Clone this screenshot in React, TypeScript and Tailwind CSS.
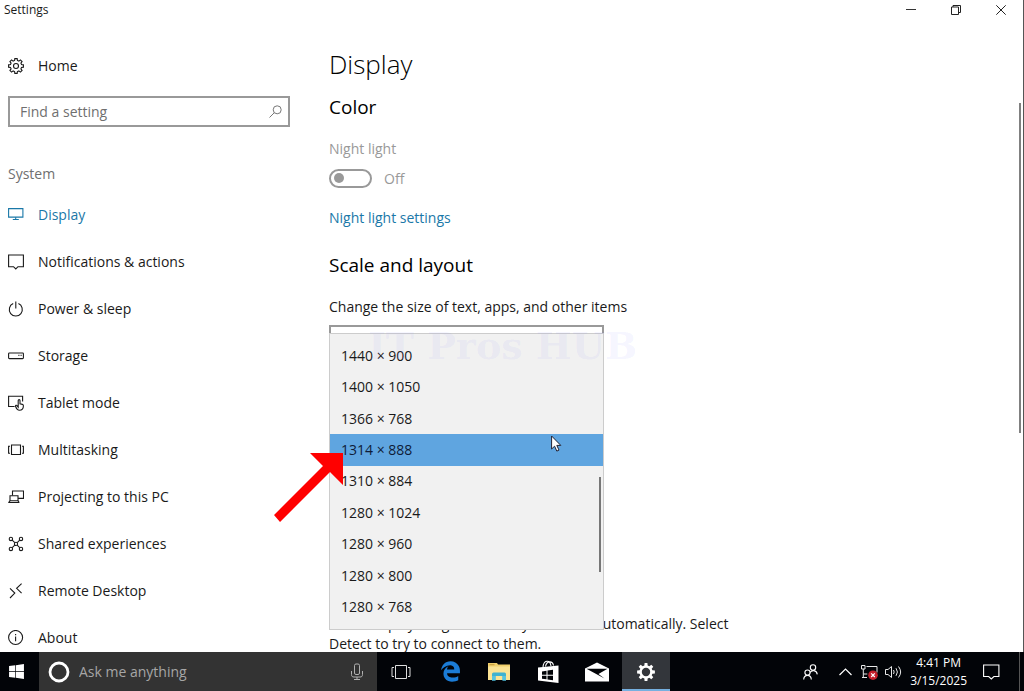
import { useState } from 'react';
import type { ReactNode } from 'react';
import { FaEdgeLegacy, FaWindows } from 'react-icons/fa6';

// Outline of a cog with flat teeth, centred on (c, c)
function gearPath(c: number, outer: number, inner: number, teeth = 8) {
  const step = (Math.PI * 2) / teeth;
  const points: string[] = [];
  for (let i = 0; i < teeth; i++) {
    const a = i * step - Math.PI / 2;
    [
      [-0.32, inner],
      [-0.2, outer],
      [0.2, outer],
      [0.32, inner],
    ].forEach(([offset, r]) => {
      const x = c + r * Math.cos(a + offset * step);
      const y = c + r * Math.sin(a + offset * step);
      points.push(`${x.toFixed(2)} ${y.toFixed(2)}`);
    });
  }
  return `M${points.join('L')}Z`;
}

function Icon({ children, size = 16 }: { children: ReactNode; size?: number }) {
  return (
    <svg
      width={size}
      height={size}
      viewBox="0 0 16 16"
      fill="none"
      stroke="currentColor"
      strokeWidth="1.1"
      className="shrink-0"
      aria-hidden="true"
    >
      {children}
    </svg>
  );
}

const navItems: { label: string; icon: ReactNode }[] = [
  {
    label: 'Display',
    icon: (
      <>
        <path d="M.6 1.6h14.3v8.500H.6z" />
        <path d="M7.7 10.200v2.200M4.8 12.500h6" />
      </>
    ),
  },
  {
    label: 'Notifications & actions',
    icon: <path d="M.6 1h14.8v11.700H10L7.8 15l-2.3-2.3H.6z" />,
  },
  {
    label: 'Power & sleep',
    icon: <path d="M7.8.4v7M5.2 2.6a6.5 6.5 0 1 0 5.2 0" />,
  },
  {
    label: 'Storage',
    icon: (
      <>
        <rect x=".6" y="5" width="14.8" height="5.6" rx=".8" />
        <path d="M10.4 7.4h1M12.6 7.4h1" />
      </>
    ),
  },
  {
    label: 'Tablet mode',
    icon: (
      <>
        <path d="M6.6 11.5H.6V1.2h14v5.2" />
        <path d="M10.200 10.800V5.600c0-1.300 1.800-1.300 1.800 0v3.200l2.400.6c.8.2 1 .7 1 1.400 0 2.500-1.200 4.500-4 4.500-2 0-3-1.600-3.900-4-.3-1 1-1.500 1.700-.4l1 1.300z" />
      </>
    ),
  },
  {
    label: 'Multitasking',
    icon: (
      <>
        <path d="M3.5 3h9v9.5h-9z" />
        <path d="M2 4.2H.6v7H2M14 4.2h1.4v7H14" />
      </>
    ),
  },
  {
    label: 'Projecting to this PC',
    icon: (
      <>
        <path d="M4.5 6.5V2h11v7.4H10" />
        <path d="M2 6.8h8v5H2zM.4 13.5h10.8" />
        <path d="M10 11.8l1.2 1.7M2 11.8L.6 13.5" />
      </>
    ),
  },
  {
    label: 'Shared experiences',
    icon: (
      <>
        <circle cx="2.9" cy="2.9" r="1.7" />
        <circle cx="13" cy="2.9" r="1.7" />
        <circle cx="2.9" cy="12.9" r="1.7" />
        <circle cx="13" cy="12.9" r="1.7" />
        <circle cx="8" cy="7.9" r="1.6" />
        <path d="M4.2 4.1l2.6 2.6M11.7 4.1L9.2 6.7M4.2 11.7l2.6-2.6M11.7 11.7L9.2 9.100" />
      </>
    ),
  },
  {
    label: 'Remote Desktop',
    icon: <path d="M13.6.6l-5 4.7 5 4.8M2 5.4l4.8 4.7L2 15" />,
  },
  {
    label: 'About',
    icon: (
      <>
        <circle cx="7.6" cy="7.5" r="7" />
        <path d="M7.6 6.5v4.8M7.6 4v1.2" />
      </>
    ),
  },
];

const resolutions = [
  '1440 × 900',
  '1400 × 1050',
  '1366 × 768',
  '1314 × 888',
  '1310 × 884',
  '1280 × 1024',
  '1280 × 960',
  '1280 × 800',
  '1280 × 768',
];

function TitleBar() {
  return (
    <header className="flex h-5 shrink-0 items-center justify-between pl-1">
      <span className="text-[12px] leading-5">Settings</span>
      <div className="flex">
        <button aria-label="Minimize" className="flex h-5 w-[45px] items-center justify-center">
          <svg width="10" height="10" viewBox="0 0 10 10" stroke="#333">
            <path d="M0 4.5h10" />
          </svg>
        </button>
        <button aria-label="Restore" className="flex h-5 w-[45px] items-center justify-center">
          <svg width="10" height="10" viewBox="0 0 10 10" fill="none" stroke="#222">
            <path d="M.5 2h7v7.500h-7zM2 2V.5h7.500v7H8" />
          </svg>
        </button>
        <button aria-label="Close" className="flex h-5 w-[45px] items-center justify-center">
          <svg width="10" height="10" viewBox="0 0 10 10" stroke="#222">
            <path d="M.3.3l9.4 9.4M9.7.3L.3 9.7" />
          </svg>
        </button>
      </div>
    </header>
  );
}

function Sidebar() {
  const [active, setActive] = useState('Display');

  return (
    <aside className="w-[290px] shrink-0 pt-[22px] pl-2">
      <a href="#home" className="flex h-[47px] items-center gap-[14px]">
        <Icon>
          <path d={gearPath(8, 7.5, 5.7)} />
          <circle cx="8" cy="8" r="2.5" />
        </Icon>
        Home
      </a>

      <div className="relative mt-[7px]">
        <input
          type="text"
          aria-label="Find a setting"
          placeholder="Find a setting"
          className="block h-[31px] w-full border-2 border-[#999] bg-white pr-8 pl-[10px] placeholder:text-[#6f6f6f]"
        />
        <svg
          width="13"
          height="13"
          viewBox="0 0 13 13"
          fill="none"
          stroke="#777"
          className="absolute top-[9px] right-2"
        >
          <circle cx="8.2" cy="4.8" r="4" />
          <path d="M5.3 7.7L.5 12.5" />
        </svg>
      </div>

      <h2 className="mt-[37px] leading-5 text-[#6f6f6f]">System</h2>
      <nav className="mt-[7px]">
        {navItems.map((item) => (
          <a
            key={item.label}
            href={`#${item.label}`}
            onClick={() => setActive(item.label)}
            className={
              item.label === active
                ? 'flex h-[47px] items-center gap-[14px] text-[#1a78a8]'
                : 'flex h-[47px] items-center gap-[14px]'
            }
          >
            <Icon>{item.icon}</Icon>
            {item.label}
          </a>
        ))}
      </nav>
    </aside>
  );
}

function ResolutionList() {
  const [selected, setSelected] = useState('1314 × 888');

  return (
    <div className="absolute -top-[23px] left-0 h-[297px] w-[275px] border border-[#ccc] bg-[#f1f1f1] py-[6px]">
      <div role="listbox" aria-label="Resolution" className="flex h-full flex-col">
        {resolutions.map((value) => (
          <button
            key={value}
            role="option"
            aria-selected={value === selected}
            onClick={() => setSelected(value)}
            className={
              value === selected
                ? 'flex-1 bg-[#5fa5e0] pl-[11px] text-left leading-5 text-[#0f1c38]'
                : 'flex-1 pl-[11px] text-left leading-5'
            }
          >
            {value}
          </button>
        ))}
      </div>
      <div className="absolute top-[143px] right-[2px] h-[95px] w-[2px] bg-[#777]" />

      {/* Watermark */}
      <div className="pointer-events-none absolute -top-[12px] left-[38px] font-['DejaVu_Serif',serif] text-[38px] leading-[47px] font-bold whitespace-nowrap text-[#7878ff]/8">
        IT Pros HUB
      </div>

      {/* Mouse pointer */}
      <svg
        width="12"
        height="18"
        viewBox="0 0 12 18"
        className="pointer-events-none absolute top-[101px] left-[221px]"
      >
        <path d="M.6 1v13l3-2.8 2.2 4.9 2.2-1-2.2-4.7h4z" fill="#fff" stroke="#223" />
      </svg>

      {/* Arrow pointing at the chosen resolution */}
      <svg
        width="70"
        height="70"
        viewBox="0 0 70 70"
        className="pointer-events-none absolute top-[118px] -left-[57px]"
      >
        <path d="M37 1h33v32L57 20 7 70l-6-7 49-49z" fill="#f00" />
      </svg>
    </div>
  );
}

function DisplaySettings() {
  return (
    <main className="relative min-w-0 flex-1 pt-6 pl-[39px]">
      <h1 className="text-[26px] leading-10 font-light text-black">Display</h1>
      <h2 className="mt-[9px] text-[19px] leading-7 text-black">Color</h2>

      <p className="mt-[18px] leading-5 text-[#999]">Night light</p>
      <label className="mt-[9px] flex h-5 items-center gap-3 text-[#999]">
        <input type="checkbox" disabled className="peer sr-only" />
        <span className="flex h-[19px] w-[43px] items-center rounded-full border-2 border-[#999] pl-[3px]">
          <span className="h-[10px] w-[10px] rounded-full bg-[#999]" />
        </span>
        Off
      </label>
      <a href="#night-light" className="mt-5 block w-fit leading-5 text-[#1a78a8]">
        Night light settings
      </a>

      <h2 className="mt-[23px] text-[19px] leading-7 text-black">Scale and layout</h2>
      <label htmlFor="scale" className="mt-[18px] block leading-5">
        Change the size of text, apps, and other items
      </label>
      <select
        id="scale"
        className="mt-2 block h-[31px] w-[275px] appearance-none border-2 border-[#999] bg-white"
      />

      <div className="relative h-[258px]">
        <ResolutionList />
      </div>

      <p className="max-w-[410px] leading-5">
        Older displays might not always connect automatically. Select Detect to try to connect to
        them.
      </p>

      <div className="absolute top-[83px] right-[2px] h-[330px] w-[2px] bg-[#808080]" />
    </main>
  );
}

function TaskButton({
  label,
  active,
  children,
}: {
  label: string;
  active?: boolean;
  children: ReactNode;
}) {
  return (
    <button
      aria-label={label}
      className={
        active
          ? 'flex h-full w-12 items-center justify-center border-b-2 border-[#76b0e0] bg-[#33363b] pt-[2px]'
          : 'flex h-full w-12 items-center justify-center'
      }
    >
      {children}
    </button>
  );
}

function Taskbar() {
  return (
    <footer className="flex h-[39px] shrink-0 items-center bg-[#020408] text-white">
      <button aria-label="Start" className="flex h-full w-[39px] items-center justify-center pr-[7px]">
        <FaWindows size={17} />
      </button>

      <div className="flex h-full w-[338px] items-center bg-[#333] pr-[13px] pl-[9px]">
        <svg width="22" height="22" viewBox="0 0 22 22" fill="none" className="shrink-0">
          <circle cx="11" cy="11" r="9" stroke="#fff" strokeWidth="2.8" />
        </svg>
        <input
          type="text"
          aria-label="Ask me anything"
          placeholder="Ask me anything"
          className="ml-[9px] min-w-0 flex-1 bg-transparent placeholder:text-[#a6a6a6]"
        />
        <svg width="14" height="18" viewBox="0 0 14 18" fill="none" stroke="#b0b0b0">
          <rect x="4.5" y="1" width="5" height="10.5" rx="1.5" />
          <path d="M1.5 8v3.5c0 2 1 2.5 2.5 2.5h6c1.5 0 2.500-.5 2.500-2.500V8M7 14v2.500M4 16.500h6" />
        </svg>
      </div>

      <div className="flex h-full gap-px">
        <TaskButton label="Task View">
          <svg width="20" height="16" viewBox="0 0 20 16" fill="none" stroke="#ddd">
            <path d="M4.5 1.5h11v13h-11zM3 3.5H1v9h2M17 3.5h2v9h-2" />
          </svg>
        </TaskButton>
        <TaskButton label="Microsoft Edge">
          <FaEdgeLegacy size={21} color="#1b7cd6" />
        </TaskButton>
        <TaskButton label="File Explorer">
          <svg width="22" height="19" viewBox="0 0 22 19">
            <path d="M0 1h9l1 1.500h12V18H0z" fill="#f0cf6c" />
            <path d="M0 4.500h22V18H0z" fill="#fbe394" />
            <path d="M1.500 2.200h5v1h-5z" fill="#c79a3b" />
            <path d="M4 18.500v-6.500q0-1.500 1.500-1.500h11q1.500 0 1.500 1.500v6.500h-3.500V14h-7v4.500z" fill="#3fb2d1" />
            <path d="M4 14h3.500v4.500H4zM14.500 14H18v4.500h-3.500z" fill="#58c4df" />
          </svg>
        </TaskButton>
        <TaskButton label="Store">
          <svg width="21" height="24" viewBox="0 0 21 24" fill="none">
            <path d="M5 7.5C5.5-.5 12-.5 13 6M7.5 6.5c1-6 7-6 8-1" stroke="#fff" strokeWidth="1.1" />
            <path d="M0 7.5l20.500-2V23L0 20.500z" fill="#fff" />
            <path
              d="M4 11.500l4.500-.7v4H4zM9.500 10.600l5.500-.8v5H9.500zM4 15.800h4.500v3.500L4 18.800zM9.500 15.800H15v4.400l-5.500-.7z"
              fill="#020408"
            />
          </svg>
        </TaskButton>
        <TaskButton label="Mail">
          <svg width="24" height="20" viewBox="0 0 24 20">
            <path d="M0 6.500L12 .5l12 6v13H0z" fill="#fff" />
            <path d="M1.500 6.800h21L13.500 12l6 4.500z" fill="#020408" />
          </svg>
        </TaskButton>
        <TaskButton label="Settings" active>
          <svg width="18" height="18" viewBox="0 0 18 18">
            <path
              d={`${gearPath(9, 9, 6.6)}M9 4.8a4.2 4.2 0 1 0 0 8.4a4.2 4.2 0 1 0 0-8.4z`}
              fill="#fff"
              fillRule="evenodd"
            />
          </svg>
        </TaskButton>
      </div>

      <div className="ml-auto flex h-full items-center">
        <button aria-label="People" className="mr-[21px]">
          <svg width="15" height="16" viewBox="0 0 15 16" fill="none" stroke="#fff" strokeWidth="1.1">
            <circle cx="10" cy="3.5" r="2.7" />
            <path d="M7 8.5c1.5-2.5 6.5-3 7.3 1.8" />
            <circle cx="4.5" cy="8.6" r="2.6" />
            <path d="M.7 15.5c.3-5.5 7.3-5.5 7.600 0" />
          </svg>
        </button>
        <button aria-label="Show hidden icons" className="mr-[9px]">
          <svg width="13" height="8" viewBox="0 0 13 8" fill="none" stroke="#fff" strokeWidth="1.2">
            <path d="M.5 7l6-6 6 6" />
          </svg>
        </button>
        <button aria-label="Network" className="mr-[7px]">
          <svg width="17" height="16" viewBox="0 0 17 16" fill="none" stroke="#e8e8e8">
            <path d="M5.5 2.5H16v6M.5 1.5H4V5H.5zM2.3 5v8.500M2.300 10h4M1 13.500h5" />
            <circle cx="12" cy="11.2" r="4.8" fill="#c4202c" stroke="none" />
            <path d="M10.2 9.4l3.6 3.6M13.8 9.400l-3.600 3.600" stroke="#fff" strokeWidth="1.2" />
          </svg>
        </button>
        <button aria-label="Volume" className="mr-[8px]">
          <svg width="17" height="14" viewBox="0 0 17 14" fill="none" stroke="#e8e8e8">
            <path d="M.5 4.500H3l3.500-3v11L3 9.500H.5z" />
            <path d="M8.500 5q1.300 2 0 4M11 3.200q2.800 3.800 0 7.600M13.500 1.500q4.300 5.500 0 11" />
          </svg>
        </button>
        <div className="text-center text-[12px] leading-[18px]">
          <div>4:41 PM</div>
          <div>3/15/2025</div>
        </div>
        <button aria-label="Action Center" className="mr-[19px] ml-[16px]">
          <svg width="17" height="16" viewBox="0 0 17 16" fill="none" stroke="#fff" strokeWidth="1.1">
            <path d="M.6 1h15.300v11.500h-5L8.300 15l-2.600-2.500H.6z" />
          </svg>
        </button>
        <button aria-label="Show desktop" className="h-full w-[5px] border-l border-[#555]" />
      </div>
    </footer>
  );
}

export default function App() {
  return (
    <div className="flex h-screen flex-col overflow-hidden bg-white font-['Open_Sans',sans-serif] text-[14px] text-[#1a1a1a]">
      <div className="flex min-h-0 flex-1 flex-col overflow-hidden border-r border-[#555]">
        <TitleBar />
        <div className="flex min-h-0 flex-1">
          <Sidebar />
          <DisplaySettings />
        </div>
      </div>
      <Taskbar />
    </div>
  );
}
